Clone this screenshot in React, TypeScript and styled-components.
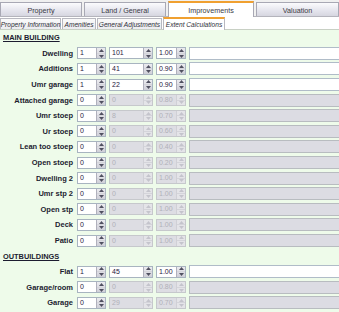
import React from "react";
import styled, { createGlobalStyle } from "styled-components";

const Global = createGlobalStyle`
  html, body { margin: 0; padding: 0; background: #ffffff; }
  body { width: 339px; height: 312px; overflow: hidden; font-family: "Liberation Sans", Arial, sans-serif; }
`;

const Page = styled.div`
  width: 339px;
  height: 312px;
  overflow: hidden;
  background: #f4f4f4;
  display: flex;
  flex-direction: column;
`;

const TopTabs = styled.div`
  display: flex;
  align-items: flex-end;
  gap: 2px;
  height: 17px;
  background: #f0f0f0;
  border-bottom: 1px solid #b4b4bc;
  box-sizing: border-box;
`;

const TopTab = styled.div<{ $w: number; $active?: boolean }>`
  width: ${(p) => p.$w}px;
  height: ${(p) => (p.$active ? 16 : 14)}px;
  box-sizing: border-box;
  display: flex;
  align-items: center;
  justify-content: center;
  font-size: 7.2px;
  color: #3a3a44;
  border: 1px solid #a8a8b4;
  border-bottom: none;
  border-top: ${(p) => (p.$active ? "2px solid #f0a030" : "1px solid #a8a8b4")};
  background: ${(p) =>
    p.$active ? "#ffffff" : "linear-gradient(#fbfbfd, #e6e6ee 55%, #d6d6e0)"};
  margin-bottom: ${(p) => (p.$active ? -1 : 0)}px;
  padding-top: ${(p) => (p.$active ? 0 : 1)}px;
`;

const SubTabs = styled.div`
  display: flex;
  align-items: flex-end;
  gap: 1px;
  height: 13px;
  background: #ffffff;
  border-bottom: 1px solid #c8d0c4;
  box-sizing: border-box;
`;

const SubTab = styled.div<{ $w: number; $active?: boolean }>`
  width: ${(p) => p.$w}px;
  height: ${(p) => (p.$active ? 13 : 11)}px;
  box-sizing: border-box;
  display: flex;
  align-items: center;
  justify-content: center;
  font-size: 6.6px;
  font-style: italic;
  white-space: nowrap;
  color: #30303a;
  border: 1px solid #b8b8c0;
  border-bottom: none;
  border-top: ${(p) => (p.$active ? "2px solid #f0a030" : "1px solid #b8b8c0")};
  background: ${(p) => (p.$active ? "#ffffff" : "linear-gradient(#fafafa, #ececf0)")};
  margin-bottom: ${(p) => (p.$active ? -1 : 0)}px;
`;

const Content = styled.div`
  flex: 1;
  background: #eefbea;
  overflow: hidden;
`;

const Heading = styled.div`
  height: 15.6px;
  display: flex;
  align-items: center;
  padding-left: 3px;
  font-size: 7.4px;
  font-weight: bold;
  text-decoration: underline;
  color: #1c1c30;
`;

const Row = styled.div`
  height: 15.6px;
  display: flex;
  align-items: center;
  white-space: nowrap;
`;

const Label = styled.div`
  width: 73px;
  flex: none;
  text-align: right;
  font-size: 7.5px;
  font-weight: bold;
  color: #1c1c30;
  margin-right: 4px;
`;

const SpinWrap = styled.div<{ $w: number; $off?: boolean }>`
  width: ${(p) => p.$w}px;
  height: 12px;
  flex: none;
  box-sizing: border-box;
  display: flex;
  border: 1px solid ${(p) => (p.$off ? "#c6c8cc" : "#a8b4c0")};
  background: ${(p) => (p.$off ? "#dddde3" : "#ffffff")};
  margin-right: 3px;
`;

const Field = styled.div<{ $off?: boolean }>`
  flex: 1;
  font-size: 7px;
  line-height: 9px;
  padding-left: 2px;
  color: ${(p) => (p.$off ? "#b0b0b8" : "#28203c")};
`;

const Spin = styled.div<{ $off?: boolean }>`
  width: 8px;
  flex: none;
  display: flex;
  flex-direction: column;
  border-left: 1px solid ${(p) => (p.$off ? "#d0d0d6" : "#b0b0bc")};
  background: ${(p) => (p.$off ? "#e4e4e8" : "linear-gradient(#ececf0, #cfcfd8)")};
`;

const SpinHalf = styled.div<{ $off?: boolean }>`
  flex: 1;
  display: flex;
  align-items: center;
  justify-content: center;
  & + & { border-top: 1px solid ${(p) => (p.$off ? "#d4d4da" : "#a8a8b4")}; }
`;

const Wide = styled.div<{ $off?: boolean }>`
  width: 160px;
  height: 13px;
  flex: none;
  box-sizing: border-box;
  border: 1px solid ${(p) => (p.$off ? "#b8bcc0" : "#b0bcc8")};
  background: ${(p) => (p.$off ? "#dcdce3" : "#ffffff")};
`;

const Arrow = ({ up, off }: { up?: boolean; off?: boolean }) => (
  <svg width="5" height="3" viewBox="0 0 5 3">
    <path d={up ? "M0 3 L2.5 0 L5 3 Z" : "M0 0 L2.5 3 L5 0 Z"} fill={off ? "#c4c4cc" : "#505060"} />
  </svg>
);

const SpinBox = ({ w, value, off }: { w: number; value: string; off?: boolean }) => (
  <SpinWrap $w={w} $off={off}>
    <Field $off={off}>{value}</Field>
    <Spin $off={off}>
      <SpinHalf $off={off}><Arrow up off={off} /></SpinHalf>
      <SpinHalf $off={off}><Arrow off={off} /></SpinHalf>
    </Spin>
  </SpinWrap>
);

type Item = [string, string, string, string, boolean];

const mainBuilding: Item[] = [
  ["Dwelling", "1", "101", "1.00", true],
  ["Additions", "1", "41", "0.90", true],
  ["Umr garage", "1", "22", "0.90", true],
  ["Attached garage", "0", "0", "0.80", false],
  ["Umr stoep", "0", "8", "0.70", false],
  ["Ur stoep", "0", "0", "0.60", false],
  ["Lean too stoep", "0", "0", "0.40", false],
  ["Open stoep", "0", "0", "0.20", false],
  ["Dwelling 2", "0", "0", "1.00", false],
  ["Umr stp 2", "0", "0", "1.00", false],
  ["Open stp", "0", "0", "1.00", false],
  ["Deck", "0", "0", "1.00", false],
  ["Patio", "0", "0", "1.00", false],
];

// last row only peeks in at the bottom edge, so its values stay blank
const outbuildings: Item[] = [
  ["Flat", "1", "45", "1.00", true],
  ["Garage/room", "0", "0", "0.80", false],
  ["Garage", "0", "29", "0.70", false],
  ["", "", "", "", false],
];

const ExtentRow = ({ item }: { item: Item }) => {
  const [label, qty, size, factor, on] = item;
  return (
    <Row>
      <Label>{label}</Label>
      <SpinBox w={29} value={qty} />
      <SpinBox w={44} value={size} off={!on} />
      <SpinBox w={30} value={factor} off={!on} />
      <Wide $off={!on} />
    </Row>
  );
};

export default function App() {
  return (
    <>
      <Global />
      <Page>
        <TopTabs>
          <TopTab $w={82}>Property</TopTab>
          <TopTab $w={82}>Land / General</TopTab>
          <TopTab $w={86} $active>Improvements</TopTab>
          <TopTab $w={83}>Valuation</TopTab>
        </TopTabs>
        <SubTabs>
          <SubTab $w={61}>Property Information</SubTab>
          <SubTab $w={34}>Amenities</SubTab>
          <SubTab $w={65}>General Adjustments</SubTab>
          <SubTab $w={62} $active>Extent Calculations</SubTab>
        </SubTabs>
        <Content>
          <Heading>MAIN BUILDING</Heading>
          {mainBuilding.map((it) => (
            <ExtentRow key={it[0]} item={it} />
          ))}
          <Heading>OUTBUILDINGS</Heading>
          {outbuildings.map((it, i) => (
            <ExtentRow key={`out-${i}`} item={it} />
          ))}
        </Content>
      </Page>
    </>
  );
}
